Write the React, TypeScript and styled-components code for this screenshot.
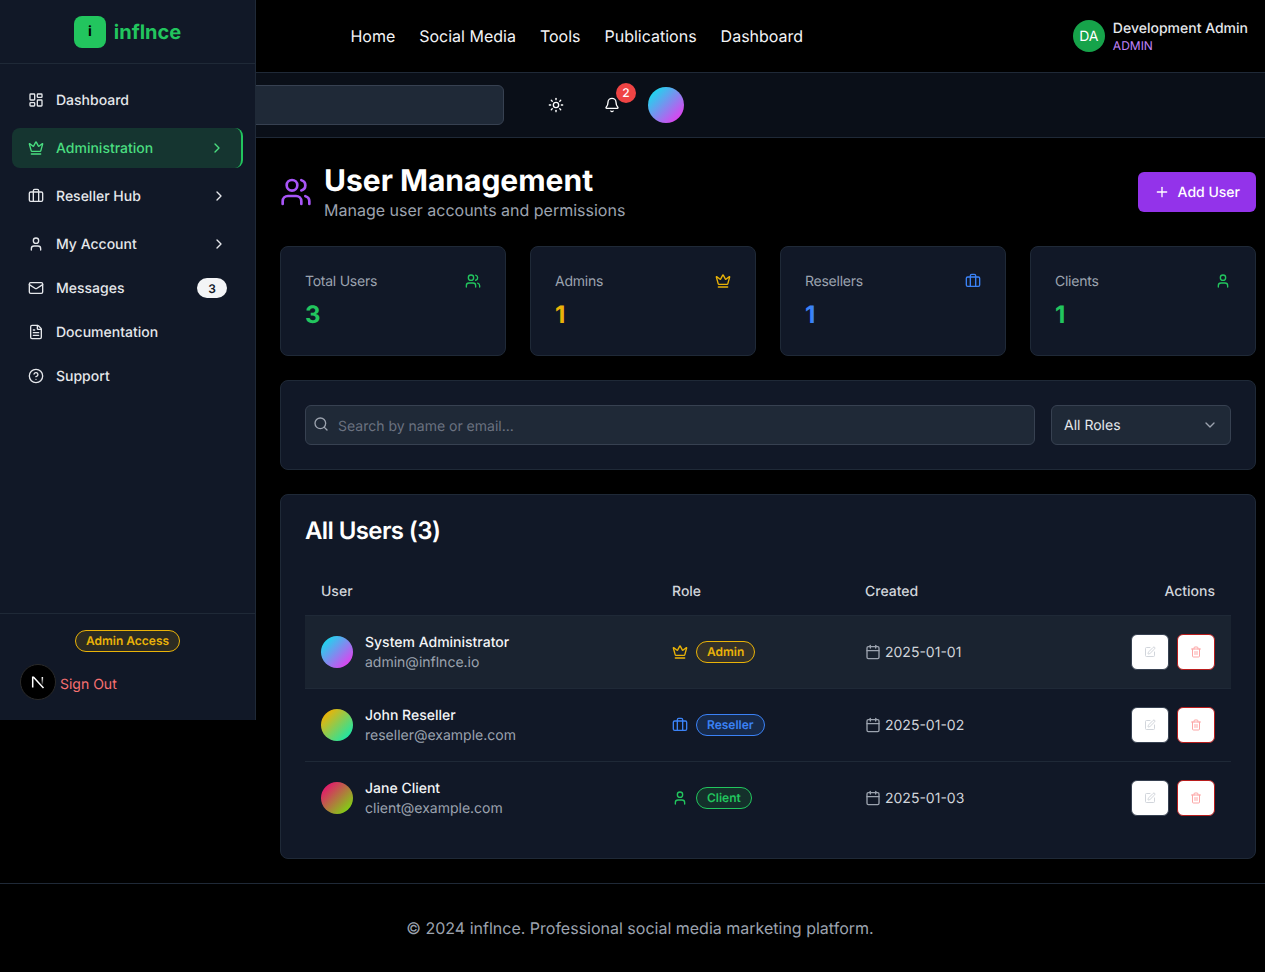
import React from "react";
import styled, { createGlobalStyle } from "styled-components";
import {
  Bell, Briefcase, Calendar, ChevronDown, ChevronRight, CircleHelp, Crown, FileText,
  LayoutDashboard, Mail, Plus, Search, SquarePen, Sun, Trash2, User, Users,
} from "lucide-react";

const Global = createGlobalStyle`
  * { box-sizing: border-box; }
  html, body { margin: 0; padding: 0; height: 972px; overflow: hidden; background: #000; }
  body { font-family: Inter, "Liberation Sans", sans-serif; color: #fff; text-rendering: geometricPrecision; }
  button, input { font-family: inherit; text-rendering: inherit; }
`;

const Page = styled.div`
  position: relative;
  width: 1280px;
  min-height: 972px;
  background: #000;
`;

const TopBar = styled.header`
  height: 73px;
  display: flex;
  align-items: center;
  justify-content: space-between;
  padding: 0 32px 0 350.4px;
  border-bottom: 1px solid #1f2937;
`;
const TopNav = styled.nav`
  display: flex;
  gap: 24px;
`;
const TopLink = styled.a`
  font-size: 16px;
  line-height: 24px;
  color: #f3f4f6;
`;
const Account = styled.div`
  display: flex;
  align-items: center;
  gap: 8px;
`;
const Initials = styled.div`
  width: 32px;
  height: 32px;
  border-radius: 50%;
  background: #16a34a;
  display: flex;
  align-items: center;
  justify-content: center;
  font-size: 14px;
  color: #fff;
`;
const AccountName = styled.div`
  padding-top: 1px;
  margin-bottom: -1px;
  font-size: 14px;
  line-height: 20px;
  font-weight: 500;
  color: #e5e7eb;
`;
const AccountRole = styled.div`
  font-size: 12px;
  line-height: 16px;
  color: #c084fc;
`;

const ToolBar = styled.div`
  height: 65px;
  display: flex;
  align-items: center;
  gap: 16px;
  padding: 0 24px;
  background: #0a0f18;
  border-bottom: 1px solid #1f2937;
`;
const ToolSearch = styled.div`
  width: 480px;
  height: 40px;
  margin-right: 16px;
  background: #1f2937;
  border: 1px solid #374151;
  border-radius: 6px;
`;
const IconButton = styled.div`
  position: relative;
  width: 40px;
  height: 40px;
  display: flex;
  align-items: center;
  justify-content: center;
  color: #fff;
`;
const CountDot = styled.span`
  position: absolute;
  top: -2px;
  right: -4px;
  width: 20px;
  height: 20px;
  padding-bottom: 2px;
  border-radius: 50%;
  background: #ef4444;
  color: #fff;
  font-size: 12px;
  font-weight: 500;
  display: flex;
  align-items: center;
  justify-content: center;
`;
const Avatar = styled.div<{ $size: number; $from: string; $to: string }>`
  flex: none;
  width: ${(p) => p.$size}px;
  height: ${(p) => p.$size}px;
  border-radius: 50%;
  background: linear-gradient(135deg, ${(p) => p.$from} 15%, ${(p) => p.$to} 85%);
`;

const Main = styled.main`
  padding: 24px 24px 24px 280px;
  display: flex;
  flex-direction: column;
  gap: 24px;
`;
const TitleRow = styled.div`
  display: flex;
  align-items: center;
  justify-content: space-between;
`;
const TitleGroup = styled.div`
  display: flex;
  align-items: center;
  gap: 12px;
  color: #a855f7;
`;
const Title = styled.h1`
  margin: 0 0 -1px;
  padding-top: 1px;
  font-size: 30px;
  line-height: 36px;
  font-weight: 700;
  color: #fff;
`;
const Subtitle = styled.p`
  margin: 0;
  font-size: 16px;
  line-height: 24px;
  color: #9ca3af;
`;
const AddButton = styled.button`
  height: 40px;
  padding: 0 16px;
  display: flex;
  align-items: center;
  gap: 8px;
  border: 0;
  border-radius: 6px;
  background: #9333ea;
  color: #fff;
  font-size: 14px;
  font-weight: 500;
`;

const StatGrid = styled.div`
  display: grid;
  grid-template-columns: repeat(4, 1fr);
  gap: 24px;
`;
const Panel = styled.section`
  background: #111827;
  border: 1px solid #1f2937;
  border-radius: 8px;
  padding: 24px;
`;
const StatHead = styled.div<{ $color: string }>`
  display: flex;
  align-items: center;
  justify-content: space-between;
  height: 20px;
  margin-bottom: 8px;
  color: ${(p) => p.$color};
`;
const StatLabel = styled.span`
  padding-top: 2px;
  font-size: 14px;
  line-height: 20px;
  letter-spacing: -0.25px;
  color: #9ca3af;
`;
const StatValue = styled.div<{ $color: string }>`
  font-size: 24px;
  line-height: 32px;
  font-weight: 700;
  color: ${(p) => p.$color};
`;

const FilterRow = styled.div`
  display: flex;
  gap: 16px;
`;
const SearchWrap = styled.div`
  position: relative;
  flex: 1;
`;
const SearchIcon = styled(Search)`
  position: absolute;
  left: 8px;
  top: 11px;
  color: #9ca3af;
`;
const SearchInput = styled.input`
  width: 100%;
  height: 40px;
  padding: 3px 12px 0 32px;
  background: #1f2937;
  border: 1px solid #374151;
  border-radius: 6px;
  font-size: 14px;
  color: #fff;
  &::placeholder { color: #6b7280; opacity: 1; }
`;
const RoleSelect = styled.div`
  width: 180px;
  height: 40px;
  padding: 0 12px;
  display: flex;
  align-items: center;
  justify-content: space-between;
  background: #1f2937;
  border: 1px solid #374151;
  border-radius: 6px;
  font-size: 14px;
  color: #e5e7eb;
  svg { color: #9ca3af; }
`;

const TableTitle = styled.h2`
  margin: 0 0 24px;
  font-size: 24px;
  line-height: 24px;
  font-weight: 600;
  letter-spacing: -0.6px;
  color: #fff;
`;
const TableRow = styled.div<{ $head?: boolean; $shade?: boolean; $last?: boolean }>`
  display: grid;
  grid-template-columns: 351px 193px 1fr 160px;
  align-items: center;
  height: ${(p) => (p.$head ? 49 : p.$last ? 72 : 73)}px;
  border-bottom: ${(p) => (p.$last ? 0 : 1)}px solid #1f2937;
  background: ${(p) => (p.$shade ? "#1a2330" : "transparent")};
`;
const HeadCell = styled.div<{ $right?: boolean }>`
  padding: 2px 16px 0;
  font-size: 14px;
  line-height: 20px;
  font-weight: 500;
  color: #d1d5db;
  text-align: ${(p) => (p.$right ? "right" : "left")};
`;
const Cell = styled.div<{ $right?: boolean }>`
  padding: 0 16px;
  display: flex;
  align-items: center;
  justify-content: ${(p) => (p.$right ? "flex-end" : "flex-start")};
`;
const UserCell = styled(Cell)`
  gap: 12px;
`;
const RoleCell = styled(Cell)<{ $color: string }>`
  gap: 8px;
  color: ${(p) => p.$color};
`;
const DateCell = styled(Cell)`
  gap: 4px;
  color: #d1d5db;
  svg { color: #9ca3af; }
`;
const DateText = styled.span`
  padding-top: 2px;
  font-size: 14px;
  line-height: 20px;
`;
const ActionCell = styled(Cell)`
  gap: 8px;
`;
const UserText = styled.div`
  padding-top: 2px;
`;
const UserName = styled.div`
  font-size: 14px;
  line-height: 20px;
  font-weight: 500;
  color: #f3f4f6;
`;
const UserEmail = styled.div`
  font-size: 14px;
  line-height: 20px;
  color: #9ca3af;
`;
const RolePill = styled.span<{ $color: string; $bg: string }>`
  display: inline-flex;
  align-items: center;
  height: 22px;
  padding: 0 10px 2px;
  border: 1px solid ${(p) => p.$color};
  border-radius: 999px;
  background: ${(p) => p.$bg};
  color: ${(p) => p.$color};
  font-size: 12px;
  font-weight: 600;
`;
const ActionButton = styled.button<{ $danger?: boolean }>`
  width: 38px;
  height: 36px;
  padding: 0;
  display: flex;
  align-items: center;
  justify-content: center;
  background: #fff;
  border: 1px solid ${(p) => (p.$danger ? "#b91c1c" : "#374151")};
  border-radius: 6px;
  color: ${(p) => (p.$danger ? "#fca5a5" : "#d1d5db")};
`;

const Footer = styled.footer`
  border-top: 1px solid #1f2937;
  padding: 32px 0;
  text-align: center;
  font-size: 16px;
  line-height: 24px;
  color: #9ca3af;
`;

const Sidebar = styled.aside`
  position: absolute;
  top: 0;
  left: 0;
  width: 256px;
  height: 720px;
  display: flex;
  flex-direction: column;
  background: #111827;
  border-right: 1px solid #1f2937;
`;
const Brand = styled.div`
  height: 64px;
  flex: none;
  display: flex;
  align-items: center;
  justify-content: center;
  gap: 8px;
  border-bottom: 1px solid #1f2937;
`;
const BrandMark = styled.div`
  width: 32px;
  height: 32px;
  border-radius: 8px;
  background: #22c55e;
  color: #000;
  font-size: 14px;
  font-weight: 700;
  display: flex;
  align-items: center;
  justify-content: center;
`;
const BrandName = styled.span`
  font-size: 20px;
  line-height: 28px;
  font-weight: 700;
  color: #22c55e;
`;
const SideNav = styled.nav`
  flex: 1;
  padding: 16px 12px;
  display: flex;
  flex-direction: column;
`;
const SideItem = styled.a<{ $active?: boolean; $after: number }>`
  height: 40px;
  flex: none;
  margin-bottom: ${(p) => p.$after}px;
  padding: 0 16px;
  display: flex;
  align-items: center;
  gap: 12px;
  border-radius: 8px;
  font-size: 14px;
  font-weight: 500;
  color: ${(p) => (p.$active ? "#4ade80" : "#e5e7eb")};
  background: ${(p) => (p.$active ? "#153530" : "transparent")};
  border-right: ${(p) => (p.$active ? "2px solid #22c55e" : "0")};
`;
const SideText = styled.span`
  flex: 1;
`;
const CountPill = styled.span`
  width: 30px;
  height: 20px;
  border-radius: 999px;
  background: #f3f4f6;
  color: #111827;
  font-size: 12px;
  font-weight: 600;
  display: flex;
  align-items: center;
  justify-content: center;
`;
const SideFoot = styled.div`
  position: relative;
  flex: none;
  height: 107px;
  padding-top: 16px;
  border-top: 1px solid #1f2937;
  display: flex;
  flex-direction: column;
  align-items: center;
`;
const AccessPill = styled.span`
  height: 22px;
  padding: 0 10px 2px;
  border: 1px solid #eab308;
  border-radius: 999px;
  background: #2c2b22;
  color: #eab308;
  font-size: 12px;
  font-weight: 600;
  display: flex;
  align-items: center;
`;
const SignOut = styled.a`
  align-self: flex-start;
  margin: 23px 0 0 60px;
  font-size: 14px;
  line-height: 20px;
  color: #f87171;
`;
const DevBadge = styled.div`
  position: absolute;
  left: 20px;
  top: 50px;
  width: 36px;
  height: 36px;
  border-radius: 50%;
  background: #000;
  border: 1px solid #2a2a2a;
  display: flex;
  align-items: center;
  justify-content: center;
`;

const navItems = [
  { label: "Dashboard", Icon: LayoutDashboard, after: 8 },
  { label: "Administration", Icon: Crown, after: 8, active: true, more: true },
  { label: "Reseller Hub", Icon: Briefcase, after: 8, more: true },
  { label: "My Account", Icon: User, after: 4, more: true },
  { label: "Messages", Icon: Mail, after: 4, count: 3 },
  { label: "Documentation", Icon: FileText, after: 4 },
  { label: "Support", Icon: CircleHelp, after: 4 },
];

const stats = [
  { label: "Total Users", value: 3, color: "#22c55e", Icon: Users },
  { label: "Admins", value: 1, color: "#eab308", Icon: Crown },
  { label: "Resellers", value: 1, color: "#3b82f6", Icon: Briefcase },
  { label: "Clients", value: 1, color: "#22c55e", Icon: User },
];

const users = [
  { name: "System Administrator", email: "admin@inflnce.io", role: "Admin", Icon: Crown, color: "#eab308", bg: "#33312a", date: "2025-01-01", from: "#22d3ee", to: "#d946ef", shade: true },
  { name: "John Reseller", email: "reseller@example.com", role: "Reseller", Icon: Briefcase, color: "#3b82f6", bg: "#172a4a", date: "2025-01-02", from: "#eab308", to: "#22e6a0" },
  { name: "Jane Client", email: "client@example.com", role: "Client", Icon: User, color: "#22c55e", bg: "#14302b", date: "2025-01-03", from: "#e11d6a", to: "#84cc16" },
];

export default function App() {
  return (
    <Page>
      <Global />
      <TopBar>
        <TopNav>
          {["Home", "Social Media", "Tools", "Publications", "Dashboard"].map((l) => (
            <TopLink key={l}>{l}</TopLink>
          ))}
        </TopNav>
        <Account>
          <Initials>DA</Initials>
          <div>
            <AccountName>Development Admin</AccountName>
            <AccountRole>ADMIN</AccountRole>
          </div>
        </Account>
      </TopBar>
      <ToolBar>
        <ToolSearch />
        <IconButton><Sun size={16} /></IconButton>
        <IconButton><Bell size={16} /><CountDot>2</CountDot></IconButton>
        <Avatar $size={36} $from="#22d3ee" $to="#d946ef" />
      </ToolBar>
      <Main>
        <TitleRow>
          <TitleGroup>
            <Users size={32} />
            <div>
              <Title>User Management</Title>
              <Subtitle>Manage user accounts and permissions</Subtitle>
            </div>
          </TitleGroup>
          <AddButton><Plus size={16} />Add User</AddButton>
        </TitleRow>
        <StatGrid>
          {stats.map(({ label, value, color, Icon }) => (
            <Panel key={label}>
              <StatHead $color={color}>
                <StatLabel>{label}</StatLabel>
                <Icon size={16} />
              </StatHead>
              <StatValue $color={color}>{value}</StatValue>
            </Panel>
          ))}
        </StatGrid>
        <Panel>
          <FilterRow>
            <SearchWrap>
              <SearchIcon size={16} />
              <SearchInput placeholder="Search by name or email..." readOnly />
            </SearchWrap>
            <RoleSelect>All Roles<ChevronDown size={16} /></RoleSelect>
          </FilterRow>
        </Panel>
        <Panel>
          <TableTitle>All Users (3)</TableTitle>
          <TableRow $head>
            <HeadCell>User</HeadCell>
            <HeadCell>Role</HeadCell>
            <HeadCell>Created</HeadCell>
            <HeadCell $right>Actions</HeadCell>
          </TableRow>
          {users.map((u, i) => (
            <TableRow key={u.email} $shade={u.shade} $last={i === users.length - 1}>
              <UserCell>
                <Avatar $size={32} $from={u.from} $to={u.to} />
                <UserText>
                  <UserName>{u.name}</UserName>
                  <UserEmail>{u.email}</UserEmail>
                </UserText>
              </UserCell>
              <RoleCell $color={u.color}>
                <u.Icon size={16} />
                <RolePill $color={u.color} $bg={u.bg}>{u.role}</RolePill>
              </RoleCell>
              <DateCell><Calendar size={16} /><DateText>{u.date}</DateText></DateCell>
              <ActionCell $right>
                <ActionButton><SquarePen size={12} /></ActionButton>
                <ActionButton $danger><Trash2 size={12} /></ActionButton>
              </ActionCell>
            </TableRow>
          ))}
        </Panel>
      </Main>
      <Footer>© 2024 inflnce. Professional social media marketing platform.</Footer>
      <Sidebar>
        <Brand>
          <BrandMark>i</BrandMark>
          <BrandName>inflnce</BrandName>
        </Brand>
        <SideNav>
          {navItems.map(({ label, Icon, after, active, more, count }) => (
            <SideItem key={label} $active={active} $after={after}>
              <Icon size={16} />
              <SideText>{label}</SideText>
              {more && <ChevronRight size={16} />}
              {count && <CountPill>{count}</CountPill>}
            </SideItem>
          ))}
        </SideNav>
        <SideFoot>
          <AccessPill>Admin Access</AccessPill>
          <SignOut>Sign Out</SignOut>
          <DevBadge>
            <svg width="14" height="14" viewBox="0 0 14 14" fill="none">
              <defs>
                <linearGradient id="nFade" x1="0" y1="0" x2="0" y2="1">
                  <stop offset="0" stopColor="#fff" />
                  <stop offset="1" stopColor="#fff" stopOpacity="0.15" />
                </linearGradient>
              </defs>
              <path d="M1.7 12.5V2.2H2.6L12.5 13" stroke="#fff" strokeWidth="1.5" />
              <rect x="10.6" y="2" width="1.5" height="7.5" fill="url(#nFade)" />
            </svg>
          </DevBadge>
        </SideFoot>
      </Sidebar>
    </Page>
  );
}
